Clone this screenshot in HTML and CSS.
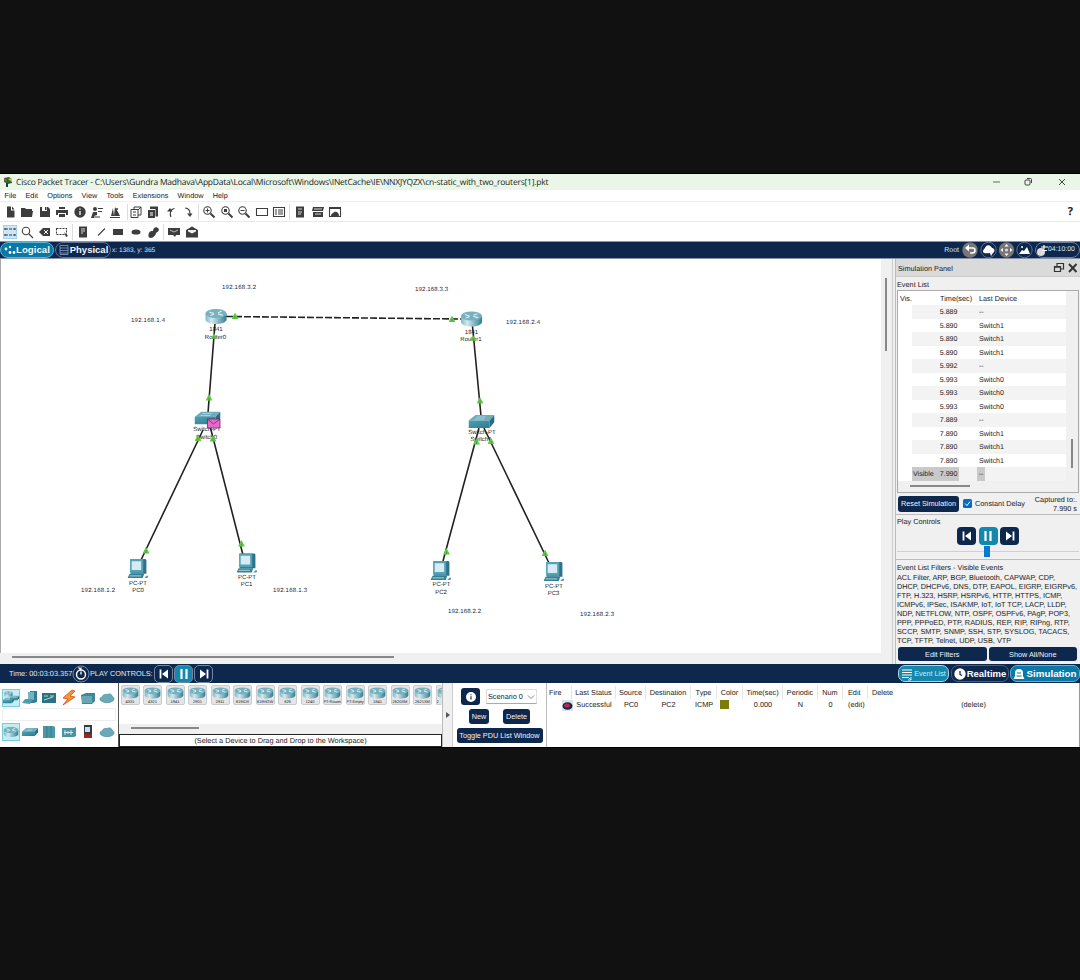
FILE: index.html
```html
<!DOCTYPE html>
<html lang="en">
<head>
<meta charset="utf-8">
<title>Cisco Packet Tracer</title>
<link rel="stylesheet" href="styles.css">
</head>
<body>
<svg class="defs" width="0" height="0">
  <defs>
    <linearGradient id="teal" x1="0" x2="1" y1="0" y2="0"><stop offset="0" stop-color="#7fb9c7"/><stop offset=".3" stop-color="#d3e8ed"/><stop offset="1" stop-color="#2f7f93"/></linearGradient>
    <linearGradient id="side" x1="0" x2="1" y1="0" y2="1"><stop offset="0" stop-color="#4f9fb1"/><stop offset="1" stop-color="#2d7b8f"/></linearGradient>
  </defs>
  <symbol id="router" viewBox="0 0 24 16" preserveAspectRatio="none"><path d="M1 5v6c0 2.500 5 4.500 11 4.500s11-2 11-4.500V5z" fill="url(#teal)"/><ellipse cx="12" cy="5" rx="11" ry="4.500" fill="#77b0bf"/><path d="M5 3.500l5 1.500M14 5.500l5 1.200M18 2.800l-4 1.500M6 7l4-1.200" stroke="#e4f3f6" stroke-width="1.200"/></symbol>
  <symbol id="switch" viewBox="0 0 26 13"><path d="M0 5.500L7 0h19l-5 5.500z" fill="#6fadbc"/><path d="M0 5.500h21V13H0z" fill="url(#side)"/><path d="M21 5.500L26 0v7l-5 6z" fill="#286d80"/><path d="M8 2h9M6 4h10" stroke="#b7dbe3" stroke-width=".8"/></symbol>
  <symbol id="pc" viewBox="0 0 20 20"><path d="M3 1h14l1 1v13H3z" fill="#2a7389"/><path d="M2.500 1h12.500v13H2.500z" fill="#53a3b7"/><path d="M4 3h9v8.500H4z" fill="#d8ebf5"/><path d="M0 19l2-4h14l-1.500 4z" fill="#377f92"/><path d="M2 17h11" stroke="#8fc5d2"/><path d="M16 19l2-2h2l-1 2z" fill="#539bac"/></symbol>
  <symbol id="link" viewBox="0 0 8 8"><path d="M4 0l4 7.500H0z" fill="#5fca45"/><path d="M4 4v3" stroke="#3e9d2f"/></symbol>
  <symbol id="prev" viewBox="0 0 16 16"><path d="M4.500 3.500v9" stroke="#fff" stroke-width="1.800"/><path d="M12 3.500v9L6 8z" fill="#fff"/></symbol>
  <symbol id="pause" viewBox="0 0 16 16"><path d="M5.500 3v10M10.500 3v10" stroke="#fff" stroke-width="2.200"/></symbol>
  <symbol id="next" viewBox="0 0 16 16"><path d="M11.500 3.500v9" stroke="#fff" stroke-width="1.800"/><path d="M4 3.500v9L10 8z" fill="#fff"/></symbol>
  <symbol id="cloud" viewBox="0 0 18 14"><path d="M3 11c-3-1-3-5 0-5 1-3 4-4 6-3 3-2 6 0 6 2 3 1 3 5 0 6-3 2-9 2-12 0z" fill="#6ba9b8" stroke="#3c8597" stroke-width=".6"/></symbol>
</svg>

<main class="window">
  <header class="titlebar">
    <svg class="app-icon" viewBox="0 0 10 12"><path d="M1 2l5-1 3 2v4L5 8 1 6z" fill="#256b36"/><path d="M5 3l4-1v4z" fill="#e8c33a"/><path d="M1 2l3 2-2 2z" fill="#c54e3c"/><path d="M3 7h2v4H3z" fill="#333"/></svg>
    <span class="title">Cisco Packet Tracer - C:\Users\Gundra Madhava\AppData\Local\Microsoft\Windows\INetCache\IE\NNXJYQZX\cn-static_with_two_routers[1].pkt</span>
    <svg class="winctl" viewBox="0 0 80 12" fill="none" stroke="#444"><path d="M0 6h7" stroke-width=".8"/><rect x="32" y="4" width="5" height="5" rx="1"/><path d="M34 2.500h3.500q1 0 1 1V7M66 3l6 6M72 3l-6 6"/></svg>
  </header>
  <nav class="menubar"><span>File</span><span>Edit</span><span>Options</span><span>View</span><span>Tools</span><span>Extensions</span><span>Window</span><span>Help</span></nav>

  <div class="toolbar">
    <svg viewBox="0 0 14 14"><path d="M4 1.500h4v4h3.500v7H4z"/><path d="M9 1.500l2.500 3H9z"/></svg>
    <svg viewBox="0 0 14 14"><path d="M1 3h4l1 1h6v2H1zM1 6h12l-1 6H1z"/></svg>
    <svg viewBox="0 0 14 14"><path fill-rule="evenodd" d="M2 2h8l2 2v8H2zM4 2v4h5V2z"/><path d="M7 2h1.500v3H7z"/></svg>
    <svg viewBox="0 0 14 14"><path d="M4 2h6v2H4zM1 5h12v5h-2V8H3v2H1zM4 9h6v3H4z"/></svg>
    <svg viewBox="0 0 14 14"><circle cx="7" cy="7" r="5.700"/><path d="M7 3.500v1.200M7 6v4" stroke="#fff" stroke-width="1.300"/></svg>
    <svg viewBox="0 0 14 14"><circle cx="5" cy="4" r="2"/><path d="M1 13l2-6h4v3l-3 1v2zM8 3h5v1H8zM8 6h4v1H8zM2 11.500h8v1H2z"/></svg>
    <svg viewBox="0 0 14 14"><path d="M2 12h10v1H2zM3 11l2-8 1 8zM6 11l1-9 3 5 2 4z"/><circle cx="9" cy="4" r="1"/></svg>
    <i class="sep late"></i>
    <svg viewBox="0 0 14 14"><path d="M5 4V2h7v8H9M2 4.500h7v8H2z" fill="none" stroke="#3d3d3d"/><path d="M4 7h3M4 10h3M9 5l3-3" stroke="#3d3d3d"/></svg>
    <svg viewBox="0 0 14 14"><path d="M4 1.500h8v10H9.500V4H4z"/><path d="M2 5h7v8H2z"/><path d="M4 8h3M4 10h3" stroke="#fff"/></svg>
    <svg viewBox="0 0 14 14"><path d="M7 12C5.500 9 6 4 10.500 3.500" class="ln"/><path d="M3 6.500L6 3l2.500 3.500z"/></svg>
    <svg viewBox="0 0 14 14"><path d="M4 3c4 0 5 3 5 6" class="ln"/><path d="M6 8.500h5.500L9 12z"/></svg>
    <i class="sep"></i>
    <svg viewBox="0 0 14 14"><circle cx="5.500" cy="5.500" r="3.700" class="ln"/><path d="M8.500 8.500l4 4" class="ln thick"/><path d="M3.500 5.500h4M5.500 3.500v4" stroke="#3d3d3d"/></svg>
    <svg viewBox="0 0 14 14"><circle cx="5.500" cy="5.500" r="3.700" class="ln"/><path d="M8.500 8.500l4 4" class="ln thick"/><path d="M4 4h3v3H4z"/></svg>
    <svg viewBox="0 0 14 14"><circle cx="5.500" cy="5.500" r="3.700" class="ln"/><path d="M8.500 8.500l4 4" class="ln thick"/><path d="M3.500 5.500h4" stroke="#3d3d3d"/></svg>
    <svg viewBox="0 0 14 14"><path d="M1.500 3.500h11v7h-11z" class="ln"/></svg>
    <svg viewBox="0 0 14 14"><path d="M1.500 2.500h11v9h-11zM3 5h2M3 7h2M3 9h2M6 5h5M6 7h5M6 9h5" class="ln"/></svg>
    <i class="sep"></i>
    <svg viewBox="0 0 14 14"><path d="M3 1.500h8v11H3z"/><path d="M5 4h4M5 7h4M5 9h3" stroke="#fff" stroke-width=".8"/></svg>
    <svg viewBox="0 0 14 14"><path d="M2 2h11l-1 4H1zM2 7h10v5H2z"/><path d="M3 4h8M4 9h6" stroke="#fff" stroke-width=".8"/></svg>
    <svg viewBox="0 0 14 14"><path d="M1.500 2.500h11v9h-11z" class="ln"/><path d="M1 2h12v2H1zM3 11c0-3 2-2 3-4 3-1 5 1 5 4z"/></svg>
    <span class="help">?</span>
  </div>
  <div class="toolbar second">
    <svg class="active" viewBox="0 0 14 14"><path d="M2 4h10M2 10h10M2 3v2M12 9v2M2 9v2M12 3v2" class="ln" stroke-dasharray="3 1"/></svg>
    <svg viewBox="0 0 14 14"><circle cx="6" cy="6" r="3.700" class="ln"/><path d="M9 9l4 4" class="ln"/></svg>
    <svg viewBox="0 0 14 14"><path d="M1 7l4-4h7v8H5z"/><path d="M6 5l4 4M10 5L6 9" stroke="#fff"/></svg>
    <svg viewBox="0 0 14 14"><path d="M1.500 3.500h10v6h-10z" class="ln" stroke-dasharray="2 1"/><path d="M9 7l4 4-2 1z"/></svg>
    <i class="sep"></i>
    <svg viewBox="0 0 14 14"><path d="M3 1.500h8v11H3z"/><path d="M5 4h4M5 6h4M5 8h2" stroke="#fff" stroke-width=".8"/></svg>
    <svg viewBox="0 0 14 14"><path d="M4 10.500l7-7" class="ln"/></svg>
    <svg viewBox="0 0 14 14"><path d="M2 4h10v6H2z"/></svg>
    <svg viewBox="0 0 14 14"><ellipse cx="7" cy="7" rx="4.500" ry="2.600"/></svg>
    <svg viewBox="0 0 14 14"><path d="M3 8c1-2 2-2 4-2 0-3 3-5 5-3s0 4-2 5c0 2-3 5-5 5-3 0-3-3-2-5z"/></svg>
    <i class="sep"></i>
    <svg viewBox="0 0 14 14"><path d="M1 3h12v7H9l-1 2-2-2H1z"/><path d="M3 5l4 2 4-2" stroke="#ddd" fill="none" stroke-width=".8"/></svg>
    <svg viewBox="0 0 14 14"><path d="M1 5l6-3.500L13 5v7.500H1z"/><path d="M3 5h8v1.500L7 8.500 3 6.500z" fill="#eee"/></svg>
  </div>

  <div class="viewbar">
    <button class="tab on"><svg viewBox="0 0 12 12" fill="#fff"><circle cx="2" cy="5" r="1.400"/><circle cx="6" cy="3" r="1.200"/><circle cx="6" cy="8.500" r="1.400"/><circle cx="10" cy="8.500" r="1.400"/></svg>Logical</button>
    <button class="tab"><svg viewBox="0 0 12 12" fill="none" stroke="#7f93b5" stroke-width=".9"><path d="M2 1.500h8v9H2zM2 4h8M2 6.500h8M2 9h8"/></svg>Physical</button>
    <span class="coords">x: 1383, y: 365</span>
    <span class="root">Root</span>
    <svg class="navicons" viewBox="0 0 66 18"><circle cx="8" cy="9" r="7.700" fill="#777"/><path d="M5 7h6q2 0 2 2.500T10 12H8" fill="none" stroke="#fff" stroke-width="1.500"/><path d="M7 3.500v7L3 7z" fill="#fff"/><circle cx="26.500" cy="9" r="7.700" class="ring"/><path d="M21 11c0-3 2-3 3-6 3-2 5 0 6 2 3 0 3 4 1 5l-2 3-1-3c-2 0-6 1-7-1z" fill="#fff"/><circle cx="44.500" cy="9" r="7.700" fill="#777"/><path d="M44.500 3l2 2.500h-4zM44.500 15l2-2.500h-4zM38.500 9L41 7v4zM50.500 9L48 7v4z" fill="#fff"/><circle cx="44.500" cy="9" r="1.500" fill="#ddd"/><circle cx="62.500" cy="9" r="7.700" class="ring"/><path d="M57 13l3-4 2 1 3-4 3 7z" fill="#fff"/><circle cx="60" cy="6" r="1" fill="#fff"/></svg>
    <span class="clock"><svg viewBox="0 0 12 14"><circle cx="5" cy="9" r="4" fill="#ddd"/><path d="M5 4h7M8 2v4M6 7.500h5" stroke="#fff" stroke-width="1.200"/></svg>04:10:00</span>
  </div>

  <section class="work">
    <div class="canvas-area">
      <svg class="topology" viewBox="0 259 881 394">
        <g class="ip">
          <text x="222" y="288.500" textLength="34">192.168.3.2</text>
          <text x="415" y="290.500" textLength="33">192.168.3.3</text>
          <text x="131" y="322" textLength="34">192.168.1.4</text>
          <text x="506" y="324" textLength="34">192.168.2.4</text>
          <text x="81" y="591.500" textLength="34">192.168.1.2</text>
          <text x="273" y="592" textLength="34">192.168.1.3</text>
          <text x="448" y="613" textLength="33">192.168.2.2</text>
          <text x="580" y="615.500" textLength="34">192.168.2.3</text>
        </g>
        <g class="lbl">
          <text x="216" y="331">1841</text><text x="215.500" y="338.500">Router0</text>
          <text x="471.500" y="333.500">1841</text><text x="471" y="341">Router1</text>
          <text x="207" y="431">Switch-PT</text><text x="206.500" y="438.500">Switch0</text>
          <text x="482" y="433.500">Switch-PT</text><text x="481" y="441">Switch1</text>
          <text x="138" y="584.500">PC-PT</text><text x="138" y="592">PC0</text>
          <text x="247" y="578.500">PC-PT</text><text x="246.500" y="586">PC1</text>
          <text x="441.500" y="586">PC-PT</text><text x="441" y="594">PC2</text>
          <text x="554" y="587.500">PC-PT</text><text x="553.500" y="595">PC3</text>
        </g>
        <path class="wire" d="M215 323L208 413M203 430L141 560M210 426L243 555M472.500 326L481 416M479 428L443 561M484 428L549 563"/>
        <path class="wire" stroke-dasharray="7 2" d="M226 316.500L461 319"/>
        <use href="#router" x="204.500" y="308.500" width="23" height="16"/><use href="#router" x="460" y="311" width="23" height="16"/>
        <use href="#switch" x="194.500" y="411.500" width="26" height="13"/><use href="#switch" x="468.500" y="415" width="26" height="13"/>
        <use href="#pc" x="127.500" y="558" width="21" height="21"/><use href="#pc" x="236.500" y="552.500" width="21" height="21"/><use href="#pc" x="430.500" y="560" width="21" height="21"/><use href="#pc" x="543.500" y="561" width="21" height="21"/>
        <g><use href="#link" x="231.500" y="312.500" width="7" height="7"/><use href="#link" x="448.500" y="315.500" width="7" height="7"/><use href="#link" x="211" y="333" width="6" height="6"/><use href="#link" x="205.500" y="394" width="7" height="7"/><use href="#link" x="194.500" y="434.500" width="7" height="7"/><use href="#link" x="209.500" y="435" width="7" height="7"/><use href="#link" x="470" y="335" width="6" height="6"/><use href="#link" x="476.500" y="397" width="7" height="7"/><use href="#link" x="473" y="438" width="7" height="7"/><use href="#link" x="487.500" y="437.500" width="7" height="7"/><use href="#link" x="142.500" y="547" width="7" height="7"/><use href="#link" x="238" y="540" width="7" height="7"/><use href="#link" x="443" y="548" width="7" height="7"/><use href="#link" x="541.500" y="549.500" width="7" height="7"/></g>
        <path d="M207.500 419h12.500v9h-12.500z" fill="#e56bc9" stroke="#7c2067" stroke-width=".8"/><path d="M207.500 419l6 5 6.500-5" fill="none" stroke="#7c2067" stroke-width=".8"/>
      </svg>
      <div class="vscroll"><i></i></div>
      <div class="hscroll"><i></i></div>
    </div>

    <aside class="panel">
      <div class="panel-head"><span>Simulation Panel</span><svg viewBox="0 0 26 12" fill="none" stroke="#333"><path d="M4 4V1.500h6.500V7H8M1.500 4.500h6v5h-6z" stroke-width="1.200"/><path d="M1.500 5h6" stroke-width="1.500"/><path d="M16 2l7.500 8M23.500 2L16 10" stroke-width="1.900"/></svg></div>
      <div class="group-label">Event List</div>
      <div class="events">
        <div class="ev head"><span>Vis.</span><span>Time(sec)</span><span>Last Device</span></div>
        <div class="ev alt"><span></span><span>5.889</span><span>--</span></div>
        <div class="ev"><span></span><span>5.890</span><span>Switch1</span></div>
        <div class="ev alt"><span></span><span>5.890</span><span>Switch1</span></div>
        <div class="ev"><span></span><span>5.890</span><span>Switch1</span></div>
        <div class="ev alt"><span></span><span>5.992</span><span>--</span></div>
        <div class="ev"><span></span><span>5.993</span><span>Switch0</span></div>
        <div class="ev alt"><span></span><span>5.993</span><span>Switch0</span></div>
        <div class="ev"><span></span><span>5.993</span><span>Switch0</span></div>
        <div class="ev alt"><span></span><span>7.889</span><span>--</span></div>
        <div class="ev"><span></span><span>7.890</span><span>Switch1</span></div>
        <div class="ev alt"><span></span><span>7.890</span><span>Switch1</span></div>
        <div class="ev"><span></span><span>7.890</span><span>Switch1</span></div>
        <div class="ev alt current"><span>Visible</span><span>7.990</span><span><b>--</b></span></div>
        <div class="ev-hscroll"><i></i></div>
        <div class="ev-vscroll"><i></i></div>
      </div>
      <div class="reset-row">
        <button class="btn reset">Reset Simulation</button>
        <svg class="check" viewBox="0 0 9 9"><rect width="9" height="9" rx="1.500" fill="#0a6ac1"/><path d="M2 4.500l2 2L7 2.500" fill="none" stroke="#fff"/></svg>
        <span class="delay">Constant Delay</span>
        <span class="captured">Captured to:.<br>7.990 s</span>
      </div>
      <div class="play">
        <div class="play-label">Play Controls</div>
        <div class="play-btns"><button><svg><use href="#prev"/></svg></button><button class="on"><svg><use href="#pause"/></svg></button><button><svg><use href="#next"/></svg></button></div>
        <div class="slider"><i></i></div>
      </div>
      <div class="filters">
        <div class="filters-title">Event List Filters - Visible Events</div>
        <p>ACL Filter, ARP, BGP, Bluetooth, CAPWAP, CDP,<br>DHCP, DHCPv6, DNS, DTP, EAPOL, EIGRP, EIGRPv6,<br>FTP, H.323, HSRP, HSRPv6, HTTP, HTTPS, ICMP,<br>ICMPv6, IPSec, ISAKMP, IoT, IoT TCP, LACP, LLDP,<br>NDP, NETFLOW, NTP, OSPF, OSPFv6, PAgP, POP3,<br>PPP, PPPoED, PTP, RADIUS, REP, RIP, RIPng, RTP,<br>SCCP, SMTP, SNMP, SSH, STP, SYSLOG, TACACS,<br>TCP, TFTP, Telnet, UDP, USB, VTP</p>
        <div class="filter-btns"><button class="btn">Edit Filters</button><button class="btn">Show All/None</button></div>
      </div>
    </aside>
  </section>

  <div class="timebar">
    <span class="time">Time: 00:03:03.357</span>
    <svg class="power" viewBox="0 0 18 18" fill="none" stroke="#fff"><circle cx="9" cy="9" r="8" stroke="#8ea0bd" stroke-width=".8"/><circle cx="9" cy="9.500" r="4.500" stroke-width="1.400"/><path d="M9 6.500v3M6.500 2.500L9 5M9 2.500v3" stroke-width="1.300"/></svg>
    <span class="pc-label">PLAY CONTROLS:</span>
    <div class="bar-btns"><button><svg><use href="#prev"/></svg></button><button class="on"><svg><use href="#pause"/></svg></button><button><svg><use href="#next"/></svg></button></div>
    <button class="pill list"><svg viewBox="0 0 12 14" fill="none" stroke="#fff"><path d="M1 3h10M1 5.500h10M1 8h10M1 10.500h6"/><path d="M7 10l3 3M10 10v3H7" stroke-width=".8"/></svg>Event List</button>
    <button class="pill real"><svg viewBox="0 0 12 14"><circle cx="6" cy="7" r="5.700" fill="#fff"/><path d="M6 4v3.500l2 1" fill="none" stroke="#0e274c" stroke-width="1.200"/></svg>Realtime</button>
    <button class="pill sim"><svg viewBox="0 0 12 14"><path d="M2 9V6q0-4 4-4t4 4v3l1.500 3H.500z" fill="#fff"/><path d="M4 6h4M3.500 9h5" stroke="#0878a8"/></svg>Simulation</button>
  </div>

  <section class="bottom">
    <div class="categories">
      <div class="cat-row">
        <svg class="sel" viewBox="0 0 18 16"><use href="#switch" x="1" y="7" width="11" height="7"/><use href="#router" x="2" y="1" width="9" height="6"/><use href="#switch" x="8" y="4" width="9" height="8"/></svg>
        <svg viewBox="0 0 18 16"><path d="M9 1h7v11l-3 1H9z" fill="#347f94"/><path d="M7 2h6v8H7z" fill="#75b4c4"/><path d="M1 13l3-4h8l-3 5z" fill="#529bad"/></svg>
        <svg viewBox="0 0 18 16"><path d="M2 3h14v10H2z" fill="#2d7283"/><path d="M4 6h4M10 6h4M4 10l9-3" stroke="#a8d7de"/></svg>
        <svg viewBox="0 0 18 16"><path d="M12 0L3 8l5 1-5 6L15 7l-5-1 5-5z" fill="#f39a22" stroke="#d7422a" stroke-width=".8"/></svg>
        <svg viewBox="0 0 18 16"><path d="M2 5l5-2h9v8l-3 3H3z" fill="#3e8798"/><path d="M3 6h10v7H3z" fill="#68a6b4"/></svg>
        <svg viewBox="0 0 18 16"><use href="#cloud" x="1" y="2" width="16" height="12"/></svg>
      </div>
      <div class="cat-gap"></div>
      <div class="cat-row">
        <svg class="sel" viewBox="0 0 18 16"><use href="#router" x="1" y="2.500" width="16" height="11"/></svg>
        <svg viewBox="0 0 18 16"><use href="#switch" x="1" y="4" width="16" height="8"/></svg>
        <svg viewBox="0 0 18 16"><path d="M3 2h10l2 1v11H3z" fill="#4c96a8"/><path d="M7 2v12M11 2v12" stroke="#397d90"/></svg>
        <svg viewBox="0 0 18 16"><path d="M2 4h12l2-1v9l-2 1H2z" fill="#4993a5"/><path d="M5 6v5M8 7v3M11 6v5M4 8.500h9" stroke="#d4ecf0"/></svg>
        <svg viewBox="0 0 18 16"><path d="M5 1h8v9H5z" fill="#333b42"/><path d="M6 3h5v5H6z" fill="#c7e2e8"/><path d="M5 10h8v4H5z" fill="#9a2525"/></svg>
        <svg viewBox="0 0 18 16"><use href="#cloud" x="1" y="2" width="16" height="12"/></svg>
      </div>
    </div>
    <div class="devices">
      <div class="tiles">
        <div class="tile"><svg><use href="#router"/></svg><span>4331</span></div><div class="tile"><svg><use href="#router"/></svg><span>4321</span></div><div class="tile"><svg><use href="#router"/></svg><span>1941</span></div><div class="tile"><svg><use href="#router"/></svg><span>2901</span></div><div class="tile"><svg><use href="#router"/></svg><span>2911</span></div><div class="tile"><svg><use href="#router"/></svg><span>819IOX</span></div><div class="tile"><svg><use href="#router"/></svg><span>819HGW</span></div><div class="tile"><svg><use href="#router"/></svg><span>829</span></div><div class="tile"><svg><use href="#router"/></svg><span>1240</span></div><div class="tile"><svg><use href="#router"/></svg><span>PT-Router</span></div><div class="tile"><svg><use href="#router"/></svg><span>PT-Empty</span></div><div class="tile"><svg><use href="#router"/></svg><span>1841</span></div><div class="tile"><svg><use href="#router"/></svg><span>2620XM</span></div><div class="tile"><svg><use href="#router"/></svg><span>2621XM</span></div><div class="tile cut"><svg><use href="#router"/></svg><span>2</span></div>
      </div>
      <div class="dev-scroll"><i></i></div>
      <div class="hint">(Select a Device to Drag and Drop to the Workspace)</div>
    </div>
    <div class="splitter"><svg viewBox="0 0 6 8"><path d="M1 1l4 3-4 3z" fill="#555"/></svg></div>
    <div class="scenario">
      <div class="sc-row first"><button class="btn info"><svg viewBox="0 0 12 12"><circle cx="6" cy="6" r="5" fill="#fff"/><path d="M6 3.300v1M6 5.200v3.300" stroke="#0e274c" stroke-width="1.100"/></svg></button><span class="select">Scenario 0<svg viewBox="0 0 8 6"><path d="M1 1.500l3 3 3-3" fill="none" stroke="#777" stroke-width=".9"/></svg></span></div>
      <div class="sc-row"><button class="btn">New</button><button class="btn del">Delete</button></div>
      <button class="btn toggle">Toggle PDU List Window</button>
    </div>
    <div class="pdu">
      <div class="pdu-row th"><span>Fire</span><span>Last Status</span><span>Source</span><span>Destination</span><span>Type</span><span>Color</span><span>Time(sec)</span><span>Periodic</span><span>Num</span><span>Edit</span><span>Delete</span></div>
      <div class="pdu-row"><span><svg class="fire" viewBox="0 0 11 11"><rect width="11" height="11" fill="#dde3ea"/><ellipse cx="5.500" cy="6" rx="5" ry="3.800" fill="#202545"/><ellipse cx="5" cy="5.500" rx="2.800" ry="2" fill="#b52c4b"/></svg></span><span>Successful</span><span>PC0</span><span>PC2</span><span>ICMP</span><span><i class="swatch"></i></span><span>0.000</span><span>N</span><span>0</span><span>(edit)</span><span>(delete)</span></div>
    </div>
  </section>
</main>
</body>
</html>
```
FILE: styles.css
```css
* { box-sizing: border-box; }
body { margin: 0; height: 980px; padding-top: 173px; background: #111; overflow: hidden; font: 7.300px/9px "Liberation Sans", Arial, sans-serif; color: #222; text-rendering: geometricPrecision; }
button { font: inherit; border: 0; padding: 0; margin: 0; color: #fff; display: flex; align-items: center; justify-content: center; background: #0e274c; }
svg { display: block; flex: none; }
span { white-space: nowrap; }
.defs { position: absolute; }
.window { width: 1080px; height: 575px; background: #fff; border-top: 1px solid #000; border-bottom: 1px solid #000; display: flex; flex-direction: column; }

.titlebar { height: 16px; flex: none; background: #eaf7e8; display: flex; align-items: center; padding-left: 3px; }
.app-icon { width: 10px; height: 12px; margin-right: 3px; }
.title { font: 8.500px/15px "Open Sans", "Noto Sans", sans-serif; color: #222; letter-spacing: -.22px; }
.winctl { width: 80px; height: 12px; margin-left: auto; margin-right: 7px; }
.menubar { height: 12px; flex: none; display: flex; gap: 9.200px; padding-left: 4.500px; line-height: 12px; font-size: 7.300px; border-bottom: 1px solid #eee; }
.toolbar { height: 20px; flex: none; display: flex; align-items: center; gap: 3.500px; padding-left: 2.500px; border-bottom: 1px solid #eaeaea; }
.toolbar svg { width: 14px; height: 14px; fill: #3d3d3d; }
.toolbar .ln { fill: none; stroke: #3d3d3d; stroke-width: 1.100; }
.toolbar .thick { stroke-width: 1.900; }
.toolbar .active { background: #cce6f8; outline: 1px solid #a6d1ef; outline-offset: -1px; }
.toolbar.second { height: 19px; border: 0; }
.sep { width: 1px; height: 16px; margin: 0 -.5px; background: #ddd; }
.sep.late { margin: 0 -2.500px 0 1.500px; }
.help { margin-left: auto; margin-right: 7px; font: bold 11px/14px "Open Sans", sans-serif; }

.viewbar { height: 18px; flex: none; background: #0e274c; border-top: 1px solid #8996a9; border-bottom: 1px solid #8996a9; display: flex; align-items: center; color: #dfe6f0; }
.tab { height: 16px; width: 54px; border: 1px solid #5d7498; border-radius: 8px; font: bold 9.700px/14px "Liberation Sans", sans-serif; color: #f4f7fa; }
.tab.on { background: #0878a8; border-color: #58b8d4; }
.tab + .tab { width: 56px; margin-left: 1px; font-size: 9.500px; }
.tab svg { width: 12px; height: 12px; }
.coords { margin-left: 1px; font-size: 6.600px; }
.root { margin-left: auto; margin-right: 3px; font-size: 7px; }
.navicons { width: 66px; height: 18px; overflow: visible; margin-right: 7px; }
.ring { fill: none; stroke: #68809f; stroke-width: .8; }
.clock { width: 45px; height: 16px; border: 1px solid #68809f; border-radius: 8px; display: flex; align-items: center; font-size: 6.900px; line-height: 14px; }
.clock svg { width: 12px; height: 14px; }

.work { height: 405px; flex: none; display: flex; background: #f0f0f0; }
.canvas-area { width: 893px; display: grid; grid-template: 393px 12px / 881px 12px; border-right: 1px solid #ccc; }
.topology { width: 881px; height: 394px; background: linear-gradient(90deg, #aaa 1px, #fff 1px); }
.ip { font-size: 6px; fill: #23233c; }
.lbl { font-size: 6px; fill: #222; text-anchor: middle; }
.wire { stroke: #222; stroke-width: 1.600; fill: none; }
.vscroll { padding: 19px 0 0 4px; }
.vscroll i { display: block; width: 2px; height: 73px; background: #888; }
.hscroll { padding: 4px 0 0 12px; }
.hscroll i { display: block; width: 382px; height: 2px; background: #888; }

.panel { width: 185px; margin-left: 2px; border-left: 1px solid #bbb; display: flex; flex-direction: column; }
.panel-head { height: 18px; flex: none; background: #dadada; display: flex; align-items: center; justify-content: space-between; padding: 1px 1px 0 2px; border-bottom: 1px solid #ccc; }
.panel-head svg { width: 26px; height: 12px; }
.group-label { height: 13px; flex: none; padding-left: 1px; line-height: 15px; }
.events { height: 203px; flex: none; margin: 0 1px; background: #fff; border: 1px solid #aaa; display: grid; grid-template: 14px repeat(13, 13.500px) 1fr / 168px 12px; }
.ev { grid-column: 1; display: grid; grid-template-columns: 40px 40px 88px; line-height: 15px; font-size: 7.100px; }
.ev.head { font-size: 7.300px; }
.ev.head span { padding-left: 2px; }
.ev.alt { background: linear-gradient(90deg, #fff 14px, #f3f3f3 14px); }
.ev:not(.head) span:nth-child(1) { padding-left: 15px; }
.ev:not(.head) span:nth-child(2) { padding-right: 20.500px; text-align: right; }
.ev span:nth-child(3) { padding-left: 1px; }
.ev.current { background: linear-gradient(90deg, #fff 14px, #c9c9c9 14px, #c9c9c9 61px, #f3f3f3 61px); }
.ev b { display: inline-block; height: 13.500px; width: 8px; font-weight: normal; background: #c9c9c9; text-align: center; margin-left: -2px; }
.ev-hscroll { grid-column: 1; background: #f0f0f0; padding: 4px 0 0 12px; }
.ev-hscroll i { display: block; width: 60px; height: 2px; background: #888; }
.ev-vscroll { grid-column: 2; grid-row: 1 / 16; background: #f0f0f0; padding: 148px 0 0 5px; }
.ev-vscroll i { display: block; width: 2px; height: 29px; background: #888; }
.btn { background: #0e274c; border-radius: 3px; color: #f1f4f8; }
.reset-row { height: 22px; flex: none; display: flex; align-items: center; padding-left: 2px; border-bottom: 1px solid #bbb; }
.reset { width: 61px; height: 16px; }
.check { width: 9px; height: 9px; margin: 0 3px 0 4px; }
.captured { margin-left: auto; text-align: right; padding-right: 3px; }
.play { height: 45px; flex: none; border-bottom: 1px solid #bbb; padding: 2px 1px 0; }
.play-label { height: 10px; line-height: 10px; }
.play-btns { display: flex; justify-content: center; gap: 2.500px; }
.play-btns button { width: 19px; height: 18px; border-radius: 4px; }
.play-btns svg, .bar-btns svg { width: 16px; height: 16px; }
.play-btns .on, .bar-btns .on, .on { background: #1687ac; }
.slider { height: 12px; background: linear-gradient(#f0f0f0 6px, #d0d0d0 6px, #d0d0d0 7px, #f0f0f0 7px); display: flex; justify-content: center; padding-right: 2px; }
.slider i { width: 6px; height: 11px; margin-top: 1px; background: #0878d1; }
.filters { padding: 3px 1px 0; }
.filters-title { line-height: 10px; }
.filters p { margin: 0 0 2px; line-height: 9px; white-space: nowrap; }
.filter-btns { display: flex; gap: 2px; padding-left: 1px; }
.filter-btns .btn { width: 88.500px; height: 14px; }

.timebar { height: 19px; flex: none; background: #0e274c; color: #e4eaf2; display: flex; align-items: center; padding-left: 9px; }
.time { width: 63px; font-size: 7.400px; }
.power { width: 18px; height: 18px; }
.pc-label { width: 63px; }
.bar-btns { display: flex; gap: 1px; margin-left: 1px; }
.bar-btns button { width: 19px; height: 18px; border: 1px solid #7186a5; border-radius: 5px; }
.pill { height: 17px; border: 1px solid #465f86; border-radius: 7px; font: bold 9.800px/15px "Liberation Sans", sans-serif; }
.pill svg { width: 12px; height: 14px; margin-right: 1px; }
.list { width: 51px; margin-left: auto; background: #1687ac; border-color: #a3d6e5; font: 7.200px/15px "Liberation Sans", sans-serif; color: #cfeaf2; }
.real { width: 58px; margin: 0 1px 0 2px; font-size: 9.500px; }
.sim { width: 70px; background: #0878a8; border-color: #58b8d4; }

.bottom { flex: 1; min-height: 0; display: flex; }
.categories { width: 118px; display: flex; flex-direction: column; padding-top: 6px; }
.cat-row { display: flex; gap: 1.200px; padding-left: 2px; }
.cat-row svg { width: 18px; height: 18px; }
.cat-row .sel { background: #c2edf2; outline: 1px solid #79cbd8; outline-offset: -1px; }
.cat-gap { height: 13px; margin: 1px 2px 2px; border: 1px solid #eee; }
.devices { width: 324px; border-left: 1px solid #555; display: flex; flex-direction: column; }
.tiles { height: 42px; display: flex; gap: 3.500px; overflow: hidden; padding: 2px 0 0 1.500px; }
.tile { width: 19px; height: 20px; flex: none; background: #e3e5e7; border: 1px solid #c8cccf; border-radius: 2px; overflow: hidden; display: flex; flex-direction: column; align-items: center; }
.tile svg { width: 17px; height: 12px; margin-top: 1px; }
.tile span { font-size: 4px; line-height: 5px; }
.tile.cut { width: 6px; align-items: flex-start; border-right: 0; }
.dev-scroll { height: 10px; background: #f0f0f0; padding: 3px 0 0 12px; }
.dev-scroll i { display: block; width: 68px; height: 2px; background: #888; }
.hint { flex: 1; border: 1px solid #222; text-align: center; line-height: 11px; }
.splitter { width: 11px; display: flex; align-items: center; justify-content: center; background: #f0f0f0; border-left: 1px solid #bbb; border-right: 1px solid #ccc; }
.splitter svg { width: 6px; height: 8px; }
.scenario { width: 93px; display: flex; flex-direction: column; align-items: center; gap: 4px; padding: 5px 0 0; }
.sc-row { display: flex; gap: 14px; }
.sc-row .btn { width: 20px; height: 15px; }
.sc-row .del { width: 27px; }
.sc-row.first { gap: 6px; padding: 0 1px 0 0; }
.sc-row .info { width: 19px; height: 17px; }
.info svg { width: 12px; height: 12px; }
.select { width: 51px; height: 15px; align-self: center; border: 1px solid #ddd; border-bottom-color: #aaa; display: flex; align-items: center; justify-content: space-between; padding: 0 1px; }
.select svg { width: 8px; height: 6px; }
.toggle { width: 86px; height: 15px; }
.pdu { flex: 1; border-left: 1px solid #bbb; border-right: 1px solid #999; padding-top: 3px; }
.pdu-row { height: 12px; display: grid; grid-template-columns: 25px 44px 30px 45px 26px 26px 40px 35px 25px 25px 1fr; line-height: 13px; text-align: center; }
.th span { border-right: 1px solid #e5e5e5; }
.th span:last-child { border: 0; }
.pdu-row span:nth-child(10) { text-align: left; padding-left: 5px; }
.th span:first-child, .th span:last-child { text-align: left; padding-left: 3px; }
.th span:first-child { padding-left: 2px; }
.th span:last-child { padding-left: 4px; }
.fire { width: 11px; height: 11px; margin: 2px 0 0 15px; }
.swatch { display: block; width: 9px; height: 9px; margin: 2px 0 0 3px; background: #7c7c0c; }
```
